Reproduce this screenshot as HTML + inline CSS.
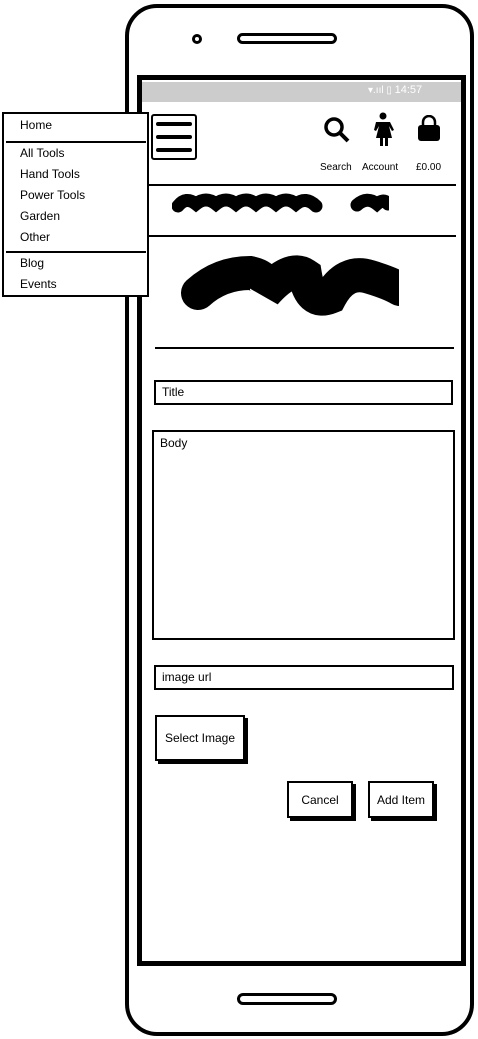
<!DOCTYPE html>
<html><head><style>
*{margin:0;padding:0;box-sizing:border-box}
body{width:478px;height:1039px;background:#fff;position:relative;overflow:hidden;font-family:"Liberation Sans",sans-serif;color:#000}
.a{position:absolute}
.t{font-size:12px}
.btn{position:absolute;border:2px solid #000;background:#fff;box-shadow:3px 3px 0 #000;font-size:12px;display:flex;align-items:center;justify-content:center}
.inp{position:absolute;border:2px solid #000;background:#fff;font-size:12px;padding-left:6px}
.hl{position:absolute;height:2px;background:#000}
</style></head><body>
<div class="a" style="left:125px;top:4px;width:349px;height:1032px;border:4px solid #000;border-radius:32px"></div>
<div class="a" style="left:192px;top:34px;width:10px;height:10px;border:3px solid #000;border-radius:50%"></div>
<div class="a" style="left:237px;top:33px;width:100px;height:11px;border:3px solid #000;border-radius:6px"></div>
<div class="a" style="left:237px;top:993px;width:100px;height:12px;border:3px solid #000;border-radius:6px"></div>
<div class="a" style="left:137px;top:75px;width:329px;height:891px;border:5px solid #000"></div>
<div class="a" style="left:142px;top:82px;width:319px;height:20px;background:#ccc"></div>
<div class="a" style="left:368px;top:84px;color:#fff;font-size:10px">&#9662;.ııl ▯ <span style="font-size:11px">14:57</span></div>
<div class="a" style="left:151px;top:114px;width:46px;height:46px;border:2px solid #000;border-radius:3px"></div>
<div class="a" style="left:156px;top:122px;width:36px;height:4px;background:#000;border-radius:2px"></div>
<div class="a" style="left:156px;top:135px;width:36px;height:4px;background:#000;border-radius:2px"></div>
<div class="a" style="left:156px;top:148px;width:36px;height:4px;background:#000;border-radius:2px"></div>
<svg class="a" style="left:322px;top:114px" width="30" height="30"><circle cx="12" cy="13" r="8" fill="none" stroke="#000" stroke-width="3.5"/><line x1="18" y1="19" x2="26" y2="27" stroke="#000" stroke-width="4"/></svg>
<svg class="a" style="left:370px;top:112px" width="26" height="34"><circle cx="13" cy="4" r="3.5"/><path d="M6 10h14l4 8-2 1-3-5 3 12h-4v8h-3v-8h-2v8h-3v-8H6l3-12-3 5-2-1z"/></svg>
<svg class="a" style="left:416px;top:115px" width="26" height="28"><path d="M7 10V7a6 6 0 0 1 12 0v3" fill="none" stroke="#000" stroke-width="2.5"/><rect x="2" y="10" width="22" height="16" rx="3"/></svg>
<div class="a" style="left:320px;top:162px;font-size:10px">Search</div>
<div class="a" style="left:362px;top:162px;font-size:10px">Account</div>
<div class="a" style="left:416px;top:162px;font-size:10px">£0.00</div>
<div class="hl" style="left:149px;top:184px;width:307px"></div>
<svg class="a" style="left:172px;top:190px" width="220" height="28"><path d="M6 16 Q14 6 24 14 Q34 6 44 14 Q54 6 64 14 Q74 6 84 14 Q94 6 104 14 Q114 6 124 14 Q134 6 144 16 M185 15 Q195 6 205 14 Q212 8 216 14" stroke="#000" stroke-width="13" fill="none" stroke-linecap="round"/><rect x="217" y="0" width="10" height="28" fill="#fff"/></svg>
<div class="hl" style="left:149px;top:235px;width:307px"></div>
<svg class="a" style="left:180px;top:255px" width="220" height="70"><path d="M18 38 Q40 18 70 18 Q90 22 85 38 Q110 10 125 20 Q130 50 150 42 Q165 14 190 22 Q210 28 220 34" stroke="#000" stroke-width="34" fill="none" stroke-linecap="round"/><rect x="219" y="0" width="10" height="70" fill="#fff"/></svg>
<div class="hl" style="left:155px;top:347px;width:299px"></div>
<div class="inp" style="left:154px;top:380px;width:299px;height:25px;line-height:21px">Title</div>
<div class="inp" style="left:152px;top:430px;width:303px;height:210px;padding-top:4px">Body</div>
<div class="inp" style="left:154px;top:665px;width:300px;height:25px;line-height:21px">image url</div>
<div class="btn" style="left:155px;top:715px;width:90px;height:46px">Select Image</div>
<div class="btn" style="left:287px;top:781px;width:66px;height:37px">Cancel</div>
<div class="btn" style="left:368px;top:781px;width:66px;height:37px">Add Item</div>
<div class="a" style="left:2px;top:112px;width:147px;height:185px;border:2px solid #000;background:#fff"></div>
<div class="a t" style="left:20px;top:117px;line-height:16px">Home</div>
<div class="hl" style="left:6px;top:141px;width:140px"></div>
<div class="a t" style="left:20px;top:143px;line-height:21px">All Tools<br>Hand Tools<br>Power Tools<br>Garden<br>Other</div>
<div class="hl" style="left:6px;top:251px;width:140px"></div>
<div class="a t" style="left:20px;top:253px;line-height:21px">Blog<br>Events</div>
</body></html>
